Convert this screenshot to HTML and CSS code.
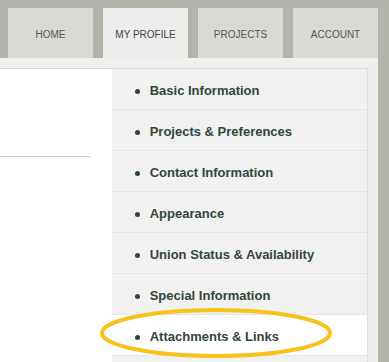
FILE: index.html
```html
<!DOCTYPE html>
<html>
<head>
    <title>My Profile</title>
    <link rel="stylesheet" href="styles.css">
</head>
<body>
    <div class="tabs">
        <a class="tab">HOME</a>
        <a class="tab active">MY PROFILE</a>
        <a class="tab">PROJECTS</a>
        <a class="tab">ACCOUNT</a>
    </div>
    <div class="page">
        <div class="content">
            <div class="rule"></div>
        </div>
        <ul class="menu">
            <li><span class="dot"></span>Basic Information</li>
            <li><span class="dot"></span>Projects &amp; Preferences</li>
            <li><span class="dot"></span>Contact Information</li>
            <li><span class="dot"></span>Appearance</li>
            <li><span class="dot"></span>Union Status &amp; Availability</li>
            <li><span class="dot"></span>Special Information</li>
            <li class="current"><span class="dot"></span>Attachments &amp; Links</li>
        </ul>
    </div>
    <svg class="circle" width="389" height="362" viewBox="0 0 389 362">
        <ellipse cx="216" cy="333" rx="114" ry="23" fill="none" stroke="#f7c21a" stroke-width="4"/>
    </svg>
</body>
</html>
```
FILE: styles.css
```css
html {
    height: 362px;
    overflow: hidden;
}

body {
    margin: 0;
    background-color: #b3b3ab;
    font-family: "Liberation Sans", Arial, sans-serif;
    height: 362px;
    overflow: hidden;
    position: relative;
}

.tabs {
    display: flex;
    gap: 10px;
    padding: 8px 0 0 8px;
}

.tab {
    width: 85px;
    height: 50px;
    display: flex;
    align-items: center;
    justify-content: center;
    background-color: #d9d9d5;
    color: #555;
    font-size: 10px;
    padding-top: 2px;
    box-sizing: border-box;
}

.tab.active {
    background-color: #ececea;
    color: #444;
}

.page {
    display: flex;
    width: 378px;
    height: 304px;
    padding-top: 10px;
    box-sizing: border-box;
    background-color: #efefed;
}

.content {
    width: 112px;
    background-color: white;
    border-top: 1px solid #d6d6d4;
}

.rule {
    width: 90px;
    margin-top: 87px;
    border-top: 1px solid #c8c8c8;
}

.menu {
    list-style: none;
    margin: 0 10px 0 0;
    padding: 0;
    width: 256px;
    background-color: #f1f1f1;
    border-top: 1px solid #d6d6d4;
    border-right: 1px solid #e0e0e0;
}

.menu li {
    height: 40px;
    border-bottom: 1px solid #e4e4e4;
    display: flex;
    align-items: center;
    padding: 2px 0 0 23px;
    box-sizing: border-box;
    height: 41px;
    font-size: 13px;
    font-weight: bold;
    color: #33463a;
}

.menu li.current {
    background-color: white;
}

.dot {
    width: 5px;
    height: 5px;
    border-radius: 50%;
    background-color: #2c4a3a;
    margin-right: 10px;
    margin-top: 2px;
}

.circle {
    position: absolute;
    left: 0;
    top: 0;
}
```
